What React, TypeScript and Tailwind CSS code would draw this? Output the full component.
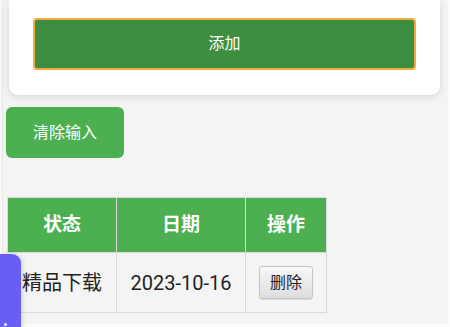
import React from "react";

const font = { fontFamily: 'Roboto, "Noto Sans CJK SC", sans-serif' };

export default function App() {
  return (
    <div className="w-[450px] h-[327px] overflow-hidden bg-[#f8f8f8] relative" style={font}>
      <div className="ml-[2px] mr-[1px] h-[325px] bg-[#f4f4f4] border-l border-l-[#e6e6e6] border-r border-r-white border-b border-b-white">
        <div className="ml-[6px] mr-[8px] bg-white rounded-b-[9px] shadow-[0_2px_8px_rgba(0,0,0,0.12)] px-[24px] pt-[18px] pb-[25px]">
          <button className="w-full h-[52px] bg-[#3d8e41] border-2 border-[#f2aa3c] rounded-[4px] text-white text-[16px] flex items-center justify-center">
            添加
          </button>
        </div>
        <div className="pl-[3px] pt-[12px]">
          <button className="w-[118px] h-[51px] bg-[#4caf50] rounded-[6px] text-white text-[16px] flex items-center justify-center">
            清除输入
          </button>
        </div>
        <div className="pl-[4px] pt-[39px]">
          <table className="border-collapse">
            <thead>
              <tr className="h-[55px] bg-[#4caf50]">
                <th className="w-[109px] border border-[#d8d8d8] text-white text-[19px] font-bold p-0">状态</th>
                <th className="w-[129px] border border-[#d8d8d8] text-white text-[19px] font-bold p-0">日期</th>
                <th className="w-[81px] border border-[#d8d8d8] text-white text-[19px] font-bold p-0">操作</th>
              </tr>
            </thead>
            <tbody>
              <tr className="h-[60px]">
                <td className="border border-[#d8d8d8] text-center text-[#222] text-[20px] p-0">精品下载</td>
                <td className="border border-[#d8d8d8] text-center text-[#222] text-[20px] p-0">2023-10-16</td>
                <td className="border border-[#d8d8d8] p-0">
                  <div className="flex justify-center">
                    <button className="w-[54px] h-[33px] rounded-[3px] border border-[#c4c4c4] bg-gradient-to-b from-[#f7f7f7] to-[#dedede] text-[#222] text-[16px] shadow-[0_1px_1px_rgba(0,0,0,0.1)]">
                      删除
                    </button>
                  </div>
                </td>
              </tr>
            </tbody>
          </table>
        </div>
      </div>
      <div className="absolute left-0 top-[254px] w-[21px] h-[80px] bg-[#6a5df6] rounded-tr-[9px] shadow-[2px_0_4px_rgba(0,0,0,0.12)]">
        <div className="absolute left-[4px] top-[69px] w-[3px] h-[3px] bg-white rounded-full" />
      </div>
    </div>
  );
}
